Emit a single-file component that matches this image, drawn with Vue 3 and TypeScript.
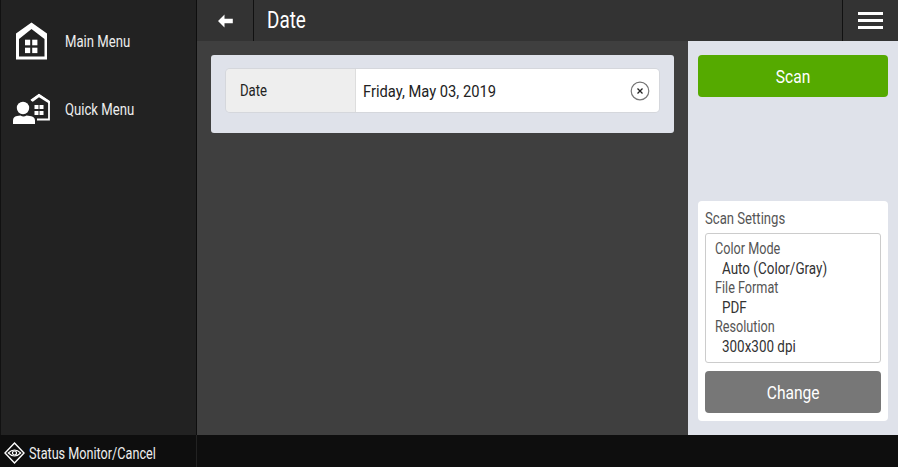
<script setup lang="ts">
const settings = [
  { label: 'Color Mode', value: 'Auto (Color/Gray)' },
  { label: 'File Format', value: 'PDF' },
  { label: 'Resolution', value: '300x300 dpi' },
]
</script>

<template>
  <div class="screen">
    <div class="top">
      <aside class="sidebar">
        <div class="nav-item first">
          <svg class="nav-icon" width="32" height="38" viewBox="0 0 32 38">
            <path fill-rule="evenodd" fill="#fff" d="M15.500 0.500 31 11.500V37.500H0V11.500zM15.500 7 3 17V34.500H28.500V17z" />
            <g fill="#fff"><rect x="9" y="17.700" width="5.200" height="5.600"/><rect x="16.200" y="17.700" width="5.200" height="5.600"/><rect x="9" y="25.700" width="5.200" height="5.400"/><rect x="16.200" y="25.700" width="5.200" height="5.400"/></g>
          </svg>
          <span class="nar down">Main Menu</span>
        </div>
        <div class="nav-item second">
          <svg class="nav-icon" width="40" height="33" viewBox="0 0 40 33">
            <path d="M19 7.500 27 1.800 37 8.500V26.500H25" fill="none" stroke="#fff" stroke-width="1.800"/>
            <path d="M19.500 6.500 27 1 37.800 8.500V11L27 4.300 20.500 9z" fill="#fff"/>
            <g fill="#fff"><rect x="22.500" y="12" width="4" height="4"/><rect x="27.500" y="12" width="4" height="4"/><rect x="22.500" y="18" width="4" height="4"/><rect x="27.500" y="18" width="4" height="4"/></g>
            <circle cx="11" cy="15" r="6.200" fill="#fff"/>
            <path d="M1 31V27.500Q1 23.500 5 23l3.500-.5q3 2 6 0L18 23q5 .5 5 4.500V31z" fill="#fff"/>
          </svg>
          <span class="nar">Quick Menu</span>
        </div>
      </aside>
      <main class="main">
        <header class="bar">
          <div class="back">
            <svg width="15" height="14" viewBox="0 0 15 14"><path d="M6.500 0.500 0 7l6.500 6.500V9.200H14.800V4.800H6.500z" fill="#fff"/></svg>
          </div>
          <h1 class="title"><span class="nar">Date</span></h1>
          <div class="menu"><i></i><i></i><i></i></div>
        </header>
        <div class="body">
          <section class="content">
            <div class="card">
              <div class="field">
                <div class="field-label"><span class="nar">Date</span></div>
                <div class="field-value">
                  <span class="nar wide down">Friday, May 03, 2019</span>
                  <svg width="20" height="20" viewBox="0 0 20 20">
                    <circle cx="10" cy="10" r="8.800" fill="#fff" stroke="#777" stroke-width="1.200"/>
                    <path d="M7.500 7.500l5 5M12.500 7.500l-5 5" stroke="#222" stroke-width="1.300"/>
                  </svg>
                </div>
              </div>
            </div>
          </section>
          <section class="side">
            <button class="scan"><span class="nar mid">Scan</span></button>
            <div class="panel">
              <div class="panel-title"><span class="nar">Scan Settings</span></div>
              <div class="list">
                <template v-for="s in settings" :key="s.label">
                  <div class="k"><span class="nar tight">{{ s.label }}</span></div>
                  <div class="v"><span class="nar val">{{ s.value }}</span></div>
                </template>
              </div>
              <button class="change"><span class="nar mid">Change</span></button>
            </div>
          </section>
        </div>
      </main>
    </div>
    <footer class="foot">
      <div class="status">
        <svg width="21" height="22" viewBox="0 0 21 22">
          <path d="M10.500 1 20 11 10.500 21 1 11z" fill="none" stroke="#fff" stroke-width="1.400"/>
          <path d="M4.300 11q6.200-6 12.400 0q-6.200 6-12.400 0z" fill="none" stroke="#fff" stroke-width="1.100"/>
          <circle cx="10.500" cy="11" r="2" fill="none" stroke="#fff" stroke-width="1.200"/>
        </svg>
        <span class="nar tight">Status Monitor/Cancel</span>
      </div>
    </footer>
  </div>
</template>

<style>
html, body { margin: 0; background: #0e0e0e; }
</style>

<style scoped>
.screen {
  width: 898px; height: 467px; display: flex; flex-direction: column; overflow: hidden;
  font-family: Roboto, "Noto Sans", sans-serif; background: #0e0e0e;
}
.nar { display: inline-block; white-space: nowrap; transform: scaleX(0.82); transform-origin: left center; }
.nar.mid { transform-origin: center; }
.nar.tight { transform: scaleX(0.79); }
.nar.val { transform: scaleX(0.84); }
.nar.wide { transform: scaleX(0.92); }
.down { margin-top: 2px; }
.top { flex: 1; display: flex; min-height: 0; }
.sidebar {
  width: 195px; background: #222; border-right: 1px solid #0e0e0e; border-left: 1px solid #111;
  flex: none; display: flex; flex-direction: column; color: #eee; font-size: 16px;
}
.nav-item { display: flex; align-items: center; height: 69px; }
.nav-icon { flex: none; }
.first { padding-left: 15px; gap: 17px; margin-top: 6px; }
.second { padding-left: 11px; gap: 13px; }
.main { flex: 1; display: flex; flex-direction: column; min-width: 0; }
.bar { height: 41px; flex: none; background: #333; display: flex; align-items: stretch; color: #fff; }
.back { width: 56px; display: flex; align-items: center; justify-content: center; border-right: 1px solid #111; }
.title { flex: 1; margin: 0; padding-left: 13px; font-size: 23px; font-weight: 400; line-height: 42px; }
.menu { width: 56px; box-sizing: border-box; border-left: 1px solid #111; display: flex; flex-direction: column; align-items: center; justify-content: center; gap: 4px; }
.menu i { display: block; width: 25px; height: 3px; background: #fff; }
.body { flex: 1; display: flex; min-height: 0; }
.content { flex: 1; background: #3f3f3f; padding: 14px; }
.card { background: #dfe2ea; border-radius: 3px; height: 78px; padding: 14px 15px; box-sizing: border-box; }
.field { display: flex; height: 43px; border-radius: 4px; overflow: hidden; box-shadow: 0 0 0 1px #d5d7dc; font-size: 16px; color: #222; }
.field-label { width: 130px; box-sizing: border-box; background: #eee; padding-left: 14px; line-height: 44px; border-right: 1px solid #ddd; }
.field-value { flex: 1; background: #fff; display: flex; align-items: center; justify-content: space-between; padding: 0 9px 0 7px; }
.side { width: 210px; flex: none; background: #dfe2ea; padding: 14px 10px; box-sizing: border-box; display: flex; flex-direction: column; justify-content: space-between; }
.scan { height: 42px; border: 0; border-radius: 4px; background: #55aa00; color: #fff; font: inherit; font-size: 19px; padding: 0; }
.panel { background: #fff; border-radius: 4px; padding: 8px 7px; height: 220px; box-sizing: border-box; display: flex; flex-direction: column; }
.panel-title { font-size: 16px; line-height: 20px; margin-bottom: 4px; color: #555; }
.list { height: 130px; box-sizing: border-box; border: 1px solid #ccc; border-radius: 3px; padding: 5px 9px; margin-bottom: 8px; font-size: 16px; line-height: 19.500px; }
.k { color: #555; }
.v { color: #333; padding-left: 7px; }
.change { flex: none; height: 42px; border: 0; border-radius: 4px; background: #777; color: #fff; font: inherit; font-size: 19px; padding: 0; }
.foot { height: 32px; flex: none; background: #0e0e0e; display: flex; }
.status { width: 197px; display: flex; align-items: center; padding: 4px 0 0 4px; gap: 4px; color: #eee; font-size: 16px; box-sizing: border-box; border-right: 1px solid #222; }
</style>
